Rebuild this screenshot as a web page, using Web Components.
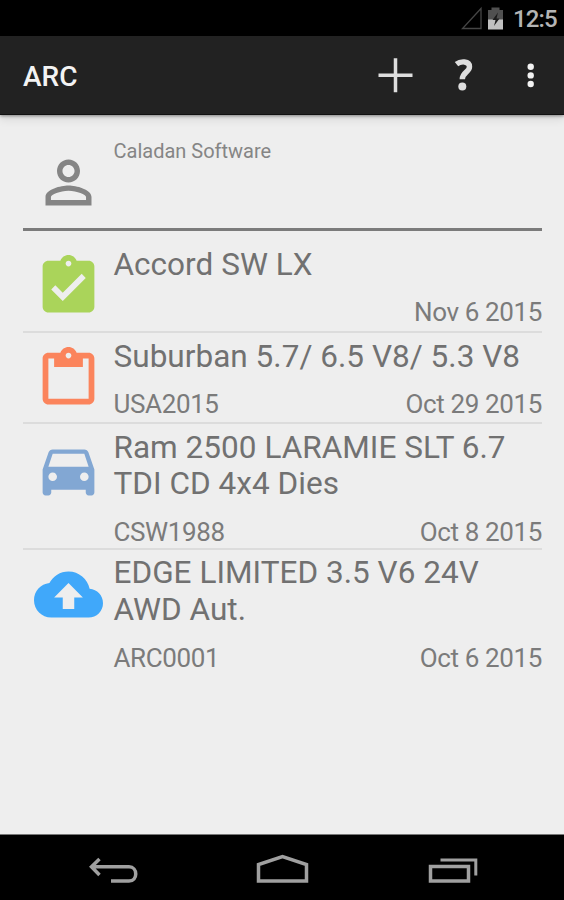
<!DOCTYPE html>
<html lang="en">
<head>
<meta charset="utf-8">
<title>ARC</title>
<style>
html, body{
    margin: 0;
    height: 100%;
    overflow: hidden;
    background-color: #eeeeee;
    font-family: Roboto, sans-serif;
}
</style>
</head>
<body>
<arc-app></arc-app>

<script>
const statusTemplate = document.createElement('template');
statusTemplate.innerHTML = `
<style>
:host{
    display: flex;
    height: 36px;
    align-items: center;
    justify-content: flex-end;
    background-color: #000;
    color: #b4b4b4;
    font-size: 24px;
    font-weight: 500;
}
svg{
    display: block;
    flex: none;
}
span{
    width: 43px;
    margin: 1px 8px 0 8px;
    line-height: 28px;
    letter-spacing: -0.9px;
    white-space: nowrap;
}
</style>
<svg width="46" height="35" viewBox="0 0 46 35">
    <path d="M3.5 27.5H22V7.5Z" fill="none" stroke="#464646" stroke-width="1.3"/>
    <path d="M32.500 6.500h8v2.500h3.500v10h-15v-10h3.500z" fill="#505050"/>
    <path d="M29 18.500h15v10h-15z" fill="#c0c0c0"/>
    <path d="M39 11.500l-5.500 7.500h3l-1.500 6 5.500-7.500h-3z" fill="#1c1c1c"/>
</svg>
<span>12:5</span>
`;

class StatusBar extends HTMLElement{
    constructor(){
        super();
        this.attachShadow({mode:'open'});
        this.shadowRoot.appendChild(statusTemplate.content.cloneNode(true));
    }
}
customElements.define('status-bar', StatusBar);


const actionTemplate = document.createElement('template');
actionTemplate.innerHTML = `
<style>
:host{
    display: flex;
    height: 79px;
    box-sizing: border-box;
    align-items: center;
    padding-left: 23px;
    background-color: #222222;
    border-bottom: 1px solid #111;
    color: #f3f3f3;
    box-shadow: 0 1px 3px rgba(0,0,0,.4), 0 4px 9px rgba(0,0,0,.1);
}
.title{
    flex: 1;
    font-size: 28px;
    font-weight: 500;
    line-height: 34px;
    letter-spacing: 0;
    padding-top: 3px;
}
svg{
    display: block;
    width: 68px;
    height: 78px;
}
</style>
<div class="title"><slot></slot></div>
<svg viewBox="0 0 68 78"><path d="M18.500 39.300h34M35.500 22.300v34" stroke="#dedede" stroke-width="3.500"/></svg>
<svg viewBox="0 0 68 78">
    <path d="M28.500 28.200c4-3.300 13-3.500 13 2.500 0 5.500-7.200 5.500-7.200 12.500" fill="none" stroke="#dedede" stroke-width="5.400"/>
    <circle cx="34.300" cy="50.500" r="4" fill="#dedede"/>
</svg>
<svg viewBox="0 0 68 78" fill="#f2f2f2">
    <circle cx="34.700" cy="30.800" r="3.200"/><circle cx="34.700" cy="39.400" r="3.200"/><circle cx="34.700" cy="48" r="3.200"/>
</svg>
`;

class ActionBar extends HTMLElement{
    constructor(){
        super();
        this.attachShadow({mode:'open'});
        this.shadowRoot.appendChild(actionTemplate.content.cloneNode(true));
    }
}
customElements.define('action-bar', ActionBar);


// 24x24 glyphs with their colour
const icons = {
    person: ['#858585', 'M12 5.900c1.160 0 2.100.94 2.100 2.100s-.94 2.100-2.100 2.100S9.900 9.160 9.900 8s.94-2.100 2.100-2.100m0 9c2.970 0 6.100 1.460 6.100 2.100v1.100H5.900V17c0-.64 3.130-2.100 6.100-2.100M12 4C9.790 4 8 5.790 8 8s1.790 4 4 4 4-1.790 4-4-1.790-4-4-4zm0 9c-2.670 0-8 1.340-8 4v3h16v-3c0-2.660-5.330-4-8-4z'],
    done: ['#aad45a', 'M19 3h-4.180C14.400 1.840 13.300 1 12 1c-1.300 0-2.400.84-2.820 2H5c-1.100 0-2 .9-2 2v14c0 1.100.9 2 2 2h14c1.100 0 2-.9 2-2V5c0-1.100-.9-2-2-2zm-7 0c.55 0 1 .45 1 1s-.45 1-1 1-1-.45-1-1 .45-1 1-1zm-2 14l-4-4 1.410-1.410L10 14.170l6.590-6.590L18 9l-8 8z'],
    pending: ['#fb845c', 'M19 3h-4.180C14.400 1.840 13.300 1 12 1c-1.300 0-2.400.84-2.820 2H5c-1.100 0-2 .9-2 2v14c0 1.100.9 2 2 2h14c1.100 0 2-.9 2-2V5c0-1.100-.9-2-2-2zm-7 0c.55 0 1 .45 1 1s-.45 1-1 1-1-.45-1-1 .45-1 1-1zm7 16H5V5h2v3h10V5h2v14z'],
    car: ['#82a7d3', 'M18.920 6.010C18.720 5.420 18.160 5 17.500 5h-11c-.66 0-1.210.42-1.420 1.010L3 12v8c0 .55.45 1 1 1h1c.55 0 1-.45 1-1v-1h12v1c0 .55.45 1 1 1h1c.55 0 1-.45 1-1v-8l-2.080-5.990zM6.500 16c-.83 0-1.500-.67-1.500-1.500S5.670 13 6.500 13s1.500.67 1.500 1.500S7.330 16 6.500 16zm11 0c-.83 0-1.500-.67-1.500-1.500s.67-1.500 1.500-1.500 1.500.67 1.500 1.500-.67 1.500-1.500 1.500zM5 11l1.500-4.500h11L19 11H5z'],
    upload: ['#40a8fa', 'M19.350 10.040C18.670 6.590 15.640 4 12 4 9.110 4 6.600 5.640 5.350 8.040 2.340 8.360 0 10.910 0 14c0 3.310 2.690 6 6 6h13c2.760 0 5-2.240 5-5 0-2.640-2.050-4.780-4.650-4.960zM14 13v4h-4v-4H7l5-5 5 5h-3z']
};

class ArcIcon extends HTMLElement{
    static get observedAttributes(){
        return ['name'];
    }

    constructor(){
        super();
        this.attachShadow({mode:'open'});
    }

    attributeChangedCallback(name, oldValue, newValue){
        const icon = icons[newValue];
        if(icon){
            this.shadowRoot.innerHTML = `
            <style>
            :host{ display: block; flex: none; }
            svg{ display: block; width: 69px; height: 69px; }
            </style>
            <svg viewBox="0 0 24 24"><path fill="${icon[0]}" d="${icon[1]}"/></svg>`;
        }
    }
}
customElements.define('arc-icon', ArcIcon);


const clientTemplate = document.createElement('template');
clientTemplate.innerHTML = `
<style>
:host{
    display: flex;
    height: 116px;
    box-sizing: border-box;
    border-bottom: 3px solid #7b7b7b;
}
arc-icon{
    padding: 33px 11px 0 10.500px;
}
.name{
    padding-top: 24px;
    font-size: 20px;
    line-height: 24px;
    color: #858585;
}
</style>
<arc-icon name="person"></arc-icon>
<div class="name"><slot></slot></div>
`;

class ClientCard extends HTMLElement{
    constructor(){
        super();
        this.attachShadow({mode:'open'});
        this.shadowRoot.appendChild(clientTemplate.content.cloneNode(true));
    }
}
customElements.define('client-card', ClientCard);


const rowTemplate = document.createElement('template');
rowTemplate.innerHTML = `
<style>
:host{
    display: flex;
    box-sizing: border-box;
    min-height: 91px;
    border-bottom: 2px solid #dcdcdc;
}
:host(:last-of-type){
    border-bottom: none;
}
arc-icon{
    padding: 10.500px 11px 0 10.500px;
}
.text{
    flex: 1;
    padding-top: 5.500px;
}
.title{
    font-size: 31.500px;
    line-height: 36.700px;
    letter-spacing: 0.03px;
    color: #717171;
    white-space: pre-line;
}
.info{
    display: flex;
    justify-content: space-between;
    padding-top: 14px;
    font-size: 26px;
    line-height: 31px;
    letter-spacing: -0.37px;
    color: #7b7b7b;
}
</style>
<arc-icon></arc-icon>
<div class="text">
    <div class="title"><slot></slot></div>
    <div class="info">
        <span><slot name="code"></slot></span>
        <span><slot name="date"></slot></span>
    </div>
</div>
`;

class OrderRow extends HTMLElement{
    constructor(){
        super();
        this.attachShadow({mode:'open'});
        this.shadowRoot.appendChild(rowTemplate.content.cloneNode(true));
    }

    connectedCallback(){
        this.shadowRoot.querySelector('arc-icon').setAttribute('name', this.getAttribute('icon'));
    }
}
customElements.define('order-row', OrderRow);


const navTemplate = document.createElement('template');
navTemplate.innerHTML = `
<style>
:host{
    display: flex;
    height: 66px;
    box-sizing: border-box;
    border-top: 1px solid #777;
    background-color: #000;
    justify-content: center;
}
svg{
    display: block;
    width: 170px;
    height: 65px;
    fill: none;
    stroke: #a0a0a0;
    stroke-width: 3.500;
}
</style>
<svg viewBox="0 0 170 65"><path d="M64.500 31.800H102C111 31.800 111 46 102 46H84M72.500 24L64.500 31.800L72.500 40"/></svg>
<svg viewBox="0 0 170 65"><path d="M61.500 46V29.500L85.500 21.500L109.500 29.500V46Z"/></svg>
<svg viewBox="0 0 170 65"><path d="M63.500 31.500H101.500V46H63.500Z"/><path d="M73.500 25H108.800V40.500" stroke-width="3"/></svg>
`;

class NavBar extends HTMLElement{
    constructor(){
        super();
        this.attachShadow({mode:'open'});
        this.shadowRoot.appendChild(navTemplate.content.cloneNode(true));
    }
}
customElements.define('nav-bar', NavBar);


const appTemplate = document.createElement('template');
appTemplate.innerHTML = `
<style>
:host{
    display: flex;
    flex-direction: column;
    height: 900px;
}
action-bar{
    z-index: 1;
}
main{
    flex: 1;
    padding: 0 22px 0 23px;
    background-color: #eeeeee;
}
.first{
    padding-top: 10px;
    min-height: 102px;
}
</style>
<status-bar></status-bar>
<action-bar>ARC</action-bar>
<main>
    <client-card>Caladan Software</client-card>
    <order-row class="first" icon="done">Accord SW LX<span slot="date">Nov 6 2015</span></order-row>
    <order-row icon="pending">Suburban 5.7/ 6.5 V8/ 5.3 V8<span slot="code">USA2015</span><span slot="date">Oct 29 2015</span></order-row>
    <order-row icon="car">Ram 2500 LARAMIE SLT 6.7
TDI CD 4x4 Dies<span slot="code">CSW1988</span><span slot="date">Oct 8 2015</span></order-row>
    <order-row icon="upload">EDGE LIMITED 3.5 V6 24V
AWD Aut.<span slot="code">ARC0001</span><span slot="date">Oct 6 2015</span></order-row>
</main>
<nav-bar></nav-bar>
`;

class ArcApp extends HTMLElement{
    constructor(){
        super();
        this.attachShadow({mode:'open'});
        this.shadowRoot.appendChild(appTemplate.content.cloneNode(true));
    }
}
customElements.define('arc-app', ArcApp);
</script>
</body>
</html>
